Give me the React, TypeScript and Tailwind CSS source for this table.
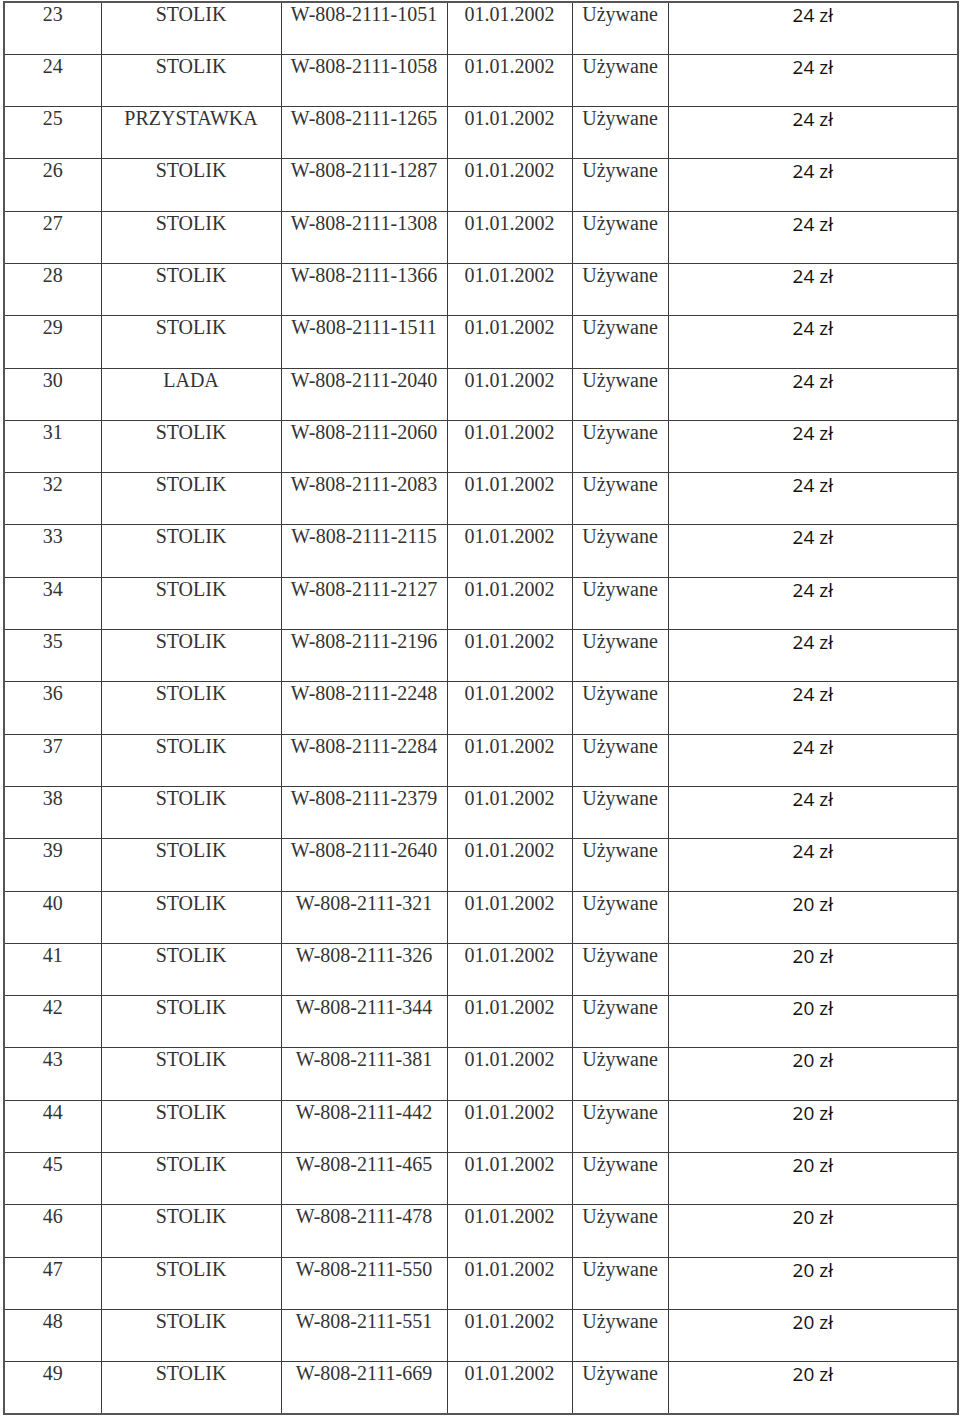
type Row = {
  lp: number;
  name: string;
  code: string;
  price: string;
};

const codes: [number, string, string][] = [
  [23, "STOLIK", "1051"],
  [24, "STOLIK", "1058"],
  [25, "PRZYSTAWKA", "1265"],
  [26, "STOLIK", "1287"],
  [27, "STOLIK", "1308"],
  [28, "STOLIK", "1366"],
  [29, "STOLIK", "1511"],
  [30, "LADA", "2040"],
  [31, "STOLIK", "2060"],
  [32, "STOLIK", "2083"],
  [33, "STOLIK", "2115"],
  [34, "STOLIK", "2127"],
  [35, "STOLIK", "2196"],
  [36, "STOLIK", "2248"],
  [37, "STOLIK", "2284"],
  [38, "STOLIK", "2379"],
  [39, "STOLIK", "2640"],
  [40, "STOLIK", "321"],
  [41, "STOLIK", "326"],
  [42, "STOLIK", "344"],
  [43, "STOLIK", "381"],
  [44, "STOLIK", "442"],
  [45, "STOLIK", "465"],
  [46, "STOLIK", "478"],
  [47, "STOLIK", "550"],
  [48, "STOLIK", "551"],
  [49, "STOLIK", "669"],
];

const rows: Row[] = codes.map(([lp, name, suffix]) => ({
  lp,
  name,
  code: `W-808-2111-${suffix}`,
  price: lp < 40 ? "24 zł" : "20 zł",
}));

const cell =
  "border border-[#3c3c3c] px-1 pt-0 align-top text-center text-[20px] leading-[22px] text-[#333] whitespace-nowrap";

export default function App() {
  return (
    <div className="min-h-screen bg-white pl-[3px] pt-px">
      <table
        className="table-fixed border-collapse border-2 border-[#555]"
        style={{ fontFamily: '"Liberation Serif", "DejaVu Serif", serif' }}
      >
        <colgroup>
          <col className="w-[97px]" />
          <col className="w-[180px]" />
          <col className="w-[166px]" />
          <col className="w-[125px]" />
          <col className="w-[96px]" />
          <col className="w-[290px]" />
        </colgroup>
        <tbody>
          {rows.map((r) => (
            <tr key={r.lp} className="h-[52.3px]">
              <td className={cell}>{r.lp}</td>
              <td className={cell}>{r.name}</td>
              <td className={cell}>{r.code}</td>
              <td className={cell}>01.01.2002</td>
              <td className={cell}>Używane</td>
              <td
                className="border border-[#3c3c3c] pt-0 align-top text-center font-['Open_Sans',sans-serif] text-[19px] leading-[24px] text-[#111]"
              >
                {r.price}
              </td>
            </tr>
          ))}
        </tbody>
      </table>
    </div>
  );
}
